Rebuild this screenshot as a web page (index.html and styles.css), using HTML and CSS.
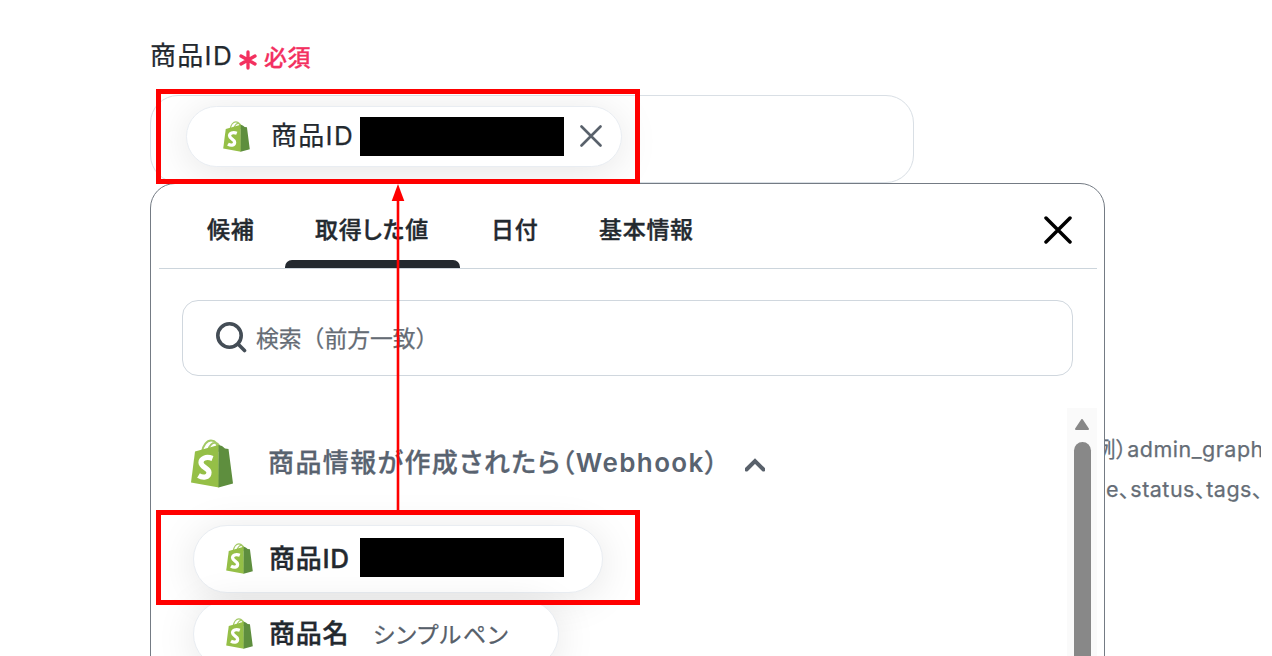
FILE: index.html
```html
<!DOCTYPE html>
<html lang="ja">
<head>
<meta charset="utf-8">
<title>商品ID</title>
<link rel="stylesheet" href="styles.css">
</head>
<body>
<svg class="defs" width="0" height="0">
  <symbol id="bag" viewBox="0 0 42 49">
    <path d="M11 13C12 6 16 1.500 20 1.500C25 1.500 27 6 27 12M17 12C18 6 22 3 25 4C28 5 29 8 29.500 11" fill="none" stroke="#a3c965" stroke-width="2"/>
    <path d="M4 12.500L27.500 6 28 48.500 0 43.500Z" fill="#95bf47"/>
    <path d="M27.500 6L31 7 34 9.500 37.500 10 42 44.500 27.500 48.500Z" fill="#5e8e3e"/>
    <path d="M21.500 19.500C15 17 10 19.500 10 23.500C10 28.500 18 29 18 33.500C18 39 11.500 39 7.500 36.500" fill="none" stroke="#fff" stroke-width="5.200" stroke-linecap="butt"/>
  </symbol>
</svg>
<main class="page">
  <div class="label"><span class="label-text">商品ID</span>
    <svg class="star" viewBox="0 0 18 20"><path d="M9 2V18M2 6L16 14M16 6L2 14"/></svg>
    <span class="required">必須</span>
  </div>
  <div class="field">
    <div class="chip chip-selected">
      <svg class="bag"><use href="#bag"/></svg>
      <span class="chip-name">商品ID</span>
      <span class="redacted"></span>
      <svg class="remove" viewBox="0 0 22 22"><path d="M1.500 1.500L20.500 20.500M20.500 1.500L1.500 20.500"/></svg>
    </div>
  </div>
  <div class="row">
    <section class="panel">
      <nav class="tabs">
        <span class="tab t1">候補</span>
        <span class="tab t2 active">取得した値</span>
        <span class="tab t3">日付</span>
        <span class="tab t4">基本情報</span>
        <svg class="close" viewBox="0 0 28 28"><path d="M2 2L26 26M26 2L2 26"/></svg>
      </nav>
      <div class="search">
        <svg class="lens" viewBox="0 0 31 31"><circle cx="13.500" cy="13.500" r="11.700"/><path d="M22 22L28.500 28.500"/></svg>
        <span>検索（前方一致）</span>
      </div>
      <div class="content">
        <div class="list">
          <div class="group">
            <svg class="bag-large"><use href="#bag"/></svg>
            <span class="group-name">商品情報が作成されたら（<span class="latin">Webhook</span>）</span>
            <svg class="chevron" viewBox="0 0 20 14"><path d="M1.500 11.500L10 3L18.500 11.500"/></svg>
          </div>
          <div class="chip chip-option first">
            <svg class="bag"><use href="#bag"/></svg>
            <span class="chip-name">商品ID</span>
            <span class="redacted"></span>
          </div>
          <div class="chip chip-option second">
            <svg class="bag"><use href="#bag"/></svg>
            <span class="chip-name">商品名</span>
            <span class="value">シンプルペン</span>
          </div>
        </div>
        <div class="scrollbar">
          <svg class="up" viewBox="0 0 14 11"><path d="M7 1L13 10H1Z"/></svg>
          <div class="thumb"></div>
        </div>
      </div>
    </section>
    <aside class="hint">
      <p class="hint-one">例）admin_graph</p>
      <p class="hint-two">e、status、tags、</p>
    </aside>
  </div>
  <div class="mark mark-top"></div>
  <div class="mark mark-bottom"></div>
  <svg class="arrow" viewBox="0 0 14 328"><path d="M5.700 14H8.300V328H5.700Z"/><path d="M7 0L13.300 17H0.700Z"/></svg>
</main>
</body>
</html>
```
FILE: styles.css
```css
* { box-sizing: border-box; }
body {
  margin: 0;
  background: #fff;
  color: #23292f;
  font-family: Inter, "Noto Sans CJK JP", sans-serif;
  overflow: hidden;
}
.defs { display: block; height: 0; }
svg { display: block; flex: none; fill: none; stroke-linecap: round; }
.page {
  position: relative;
  width: 1261px;
  height: 656px;
  padding-left: 150px;
  overflow: hidden;
  white-space: nowrap;
  -webkit-text-stroke-width: 0.25px;
}
.label { display: flex; height: 95px; padding-top: 36px; line-height: 40px; }
.label-text { width: 89px; font-size: 26px; letter-spacing: 1.3px; }
.star { width: 18px; height: 20px; margin-top: 14px; stroke: #f3305f; stroke-width: 3.3; }
.required { margin-left: 7px; padding-top: 2px; font-size: 23px; font-weight: 500; letter-spacing: 0.6px; color: #f3305f; -webkit-text-stroke-width: 0.3px; }
.field {
  width: 764px;
  height: 88px;
  padding: 10px 0 0 35px;
  border: 1px solid #d9dfe5;
  border-radius: 28px;
  overflow: hidden;
}
.chip {
  display: flex;
  align-items: center;
  border: 1px solid #e9edf2;
  border-radius: 34px;
  background: #fff;
  box-shadow: 0 5px 40px rgba(0, 0, 0, 0.1);
}
.chip-selected { width: 436px; height: 61px; padding-left: 36px; padding-bottom: 1px; }
.bag { width: 27px; height: 31px; }
.chip-name { flex: none; font-size: 26px; letter-spacing: 1.3px; line-height: 40px; }
.chip-selected .chip-name { width: 89px; margin-left: 21px; }
.chip-selected .bag { margin-top: 1px; }
.redacted { flex: none; width: 204px; height: 39px; background: #000; }
.remove { width: 22px; height: 22px; margin-left: 16px; stroke: #59616b; stroke-width: 2.6; }
.row { display: flex; height: 473px; }
.panel {
  flex: none;
  width: 955px;
  height: 500px;
  padding: 0 7px 0 8px;
  border: 1.5px solid #747b84;
  border-radius: 25px;
  background: #fff;
  overflow: hidden;
}
.tabs { display: flex; height: 85px; border-bottom: 1px solid #ccd5dc; padding-left: 17px; line-height: 40px; }
.tab {
  flex: none;
  height: 84px;
  padding: 26px 0 0 31px;
  font-size: 23px;
  font-weight: 500;
  letter-spacing: 0.7px;
  font-feature-settings: "palt";
  -webkit-text-stroke-width: 0.4px;
}
.t1 { width: 109px; }
.t2 { width: 175px; padding-left: 30px; }
.t3 { width: 108px; }
.t4 { width: 170px; }
.tab.active { display: flex; flex-direction: column; }
.active::after {
  content: "";
  width: 175px;
  height: 8px;
  margin: auto 0 0 -30px;
  border-radius: 7px 7px 0 0;
  background: #23292f;
}
.close { width: 28px; height: 28px; margin: 32px 25px 0 auto; stroke: #000; stroke-width: 3.5; }
.search {
  display: flex;
  align-items: center;
  width: 891px;
  height: 76px;
  margin: 31px 0 0 23px;
  padding: 0 0 1px 33px;
  border: 1px solid #d0d7de;
  border-radius: 16px;
  color: #656c75;
  font-size: 22.8px;
}
.search span { margin-left: 9px; }
.lens { width: 31px; height: 31px; margin-top: -1px; stroke: #444d56; stroke-width: 3.6; }
.content { display: flex; height: 270px; margin-top: 32px; }
.list { width: 908px; padding-left: 32px; }
.group { display: flex; height: 117px; padding-top: 31px; color: #596370; }
.bag-large { width: 42px; height: 49px; }
.group-name {
  width: 477px;
  margin: 4px 0 0 35px;
  font-size: 26px;
  font-weight: 500;
  line-height: 40px;
  letter-spacing: 1.4px;
  font-feature-settings: "palt";
  -webkit-text-stroke-width: 0.3px;
}
.latin { font-weight: 600; letter-spacing: 1.4px; -webkit-text-stroke-width: 0; }
.chevron { width: 20px; height: 14px; margin-top: 19px; stroke: #59616b; stroke-width: 4; }
.chip-option { height: 68px; margin-left: 2px; padding: 0 0 2px 32px; }
.chip-option .chip-name { width: 91px; margin-left: 16px; padding-top: 2px; font-weight: 500; letter-spacing: 0.7px; -webkit-text-stroke-width: 0.4px; }
.chip-option .redacted { margin-top: -1px; }
.first { width: 410px; }
.second { width: 366px; margin-top: 7px; padding-bottom: 0; }
.second .bag { margin-top: -1px; }
.second .chip-name { padding-top: 0; }
.value { margin: -3px 0 0 13px; font-size: 23px; color: #57606a; font-feature-settings: "palt"; letter-spacing: 1.5px; }
.scrollbar { width: 30px; margin-left: 1px; padding: 11px 6px 0 7px; background: #fafafa; }
.up { width: 14px; height: 11px; margin-left: 1px; fill: #888; stroke: #888; stroke-width: 2; stroke-linejoin: round; }
.thumb { height: 300px; margin-top: 12px; border-radius: 9px; background: #888; }
.hint { width: 156px; padding-top: 246px; overflow: hidden; color: #656d76; font-size: 21.5px; line-height: 40px; letter-spacing: 0.5px; font-feature-settings: "palt"; }
.hint p { margin: 0; }
.hint-one { text-indent: -11px; }
.hint-two { text-indent: 1px; }
.mark { position: absolute; left: 156px; width: 484px; height: 95px; border: 5px solid #f00; }
.mark-top { top: 89px; }
.mark-bottom { top: 510px; }
.arrow { position: absolute; left: 391px; top: 184px; width: 14px; height: 328px; fill: #f00; }
```
